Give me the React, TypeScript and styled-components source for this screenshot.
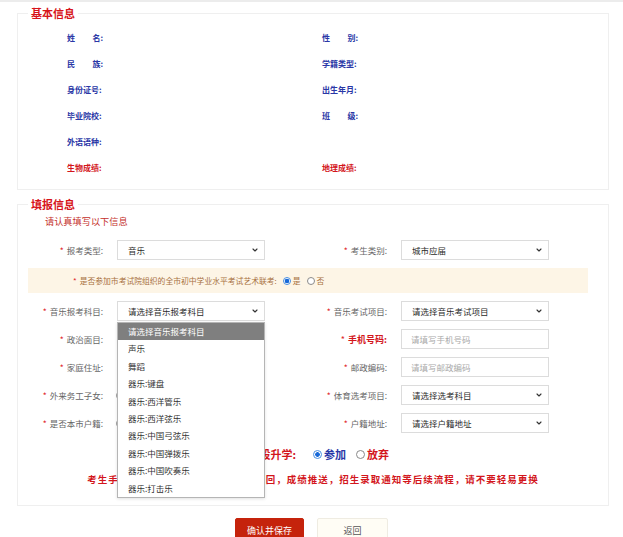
import styled, { createGlobalStyle } from 'styled-components';
import { ChevronDown } from 'lucide-react';

const GlobalStyle = createGlobalStyle`
  html, body {
    margin: 0;
    overflow: hidden;
    background: #fff;
  }
  body {
    font-family: "Noto Sans CJK SC", "Noto Sans", sans-serif;
  }
`

const Page = styled.div`
  width: 623px;
  border-top: 2px solid #ececec;
`

const Card = styled.fieldset<{ $top: number }>`
  margin: ${p => p.$top}px 14px 0 17px;
  padding: 0;
  min-width: 0;
  border: 1px solid #efefef;
  background: #fff;
`

const Legend = styled.legend`
  margin-left: 10px;
  padding: 0 3px;
  font-size: 11px;
  line-height: 14px;
  font-weight: bold;
  color: #d7141a;
`

const InfoGrid = styled.div`
  display: grid;
  grid-template-columns: 255px 1fr;
  row-gap: 12px;
  padding: 11px 0 14px 49px;
`

const InfoLabel = styled.div<{ $red?: boolean }>`
  display: flex;
  justify-content: space-between;
  width: 36px;
  height: 14px;
  font-size: 8px;
  line-height: 14px;
  font-weight: bold;
  white-space: nowrap;
  color: ${p => (p.$red ? '#d3161c' : '#2a37a6')};
`

const Hint = styled.p`
  margin: 5px 0 0 27px;
  font-size: 9.2px;
  line-height: 11px;
  color: #c4302b;
`

const Form = styled.div`
  display: flex;
  flex-direction: column;
  gap: 8px;
  margin-top: 13px;
`

const FormRow = styled.div`
  display: grid;
  grid-template-columns: 99px 148px 136px 148px;
  align-items: center;
  height: 20px;
`

const FieldLabel = styled.label<{ $strong?: boolean }>`
  padding-right: 14px;
  text-align: right;
  white-space: nowrap;
  font-size: ${p => (p.$strong ? '9px' : '8.5px')};
  font-weight: ${p => (p.$strong ? 'bold' : 'normal')};
  color: ${p => (p.$strong ? '#d3161c' : '#666')};

  b {
    color: #e0242a;
    font-weight: normal;
    margin-right: 3px;
  }
`

const SelectBox = styled.div`
  position: relative;
  display: flex;
  align-items: center;
  justify-content: space-between;
  height: 20px;
  box-sizing: border-box;
  padding: 0 5px 0 10px;
  border: 1px solid #dcdcdc;
  background: #fff;
  font-size: 8.5px;
  color: #2b2b2b;

  svg {
    color: #333;
  }
`

const TextInput = styled.input`
  width: 148px;
  height: 20px;
  box-sizing: border-box;
  padding: 0 9px;
  border: 1px solid #dcdcdc;
  font-family: inherit;
  font-size: 8.5px;
  color: #333;
  outline: none;

  &::placeholder {
    color: #aaa;
  }
`

const Options = styled.ul`
  position: absolute;
  top: 20px;
  left: -1px;
  z-index: 10;
  width: 148px;
  box-sizing: border-box;
  margin: 0;
  padding: 0;
  list-style: none;
  border: 1px solid #b5b5b5;
  background: #fff;
  box-shadow: 0 1px 3px rgba(0, 0, 0, 0.12);
`

const Option = styled.li<{ $active?: boolean }>`
  height: 17.4px;
  line-height: 17.4px;
  padding-left: 10px;
  font-size: 8.5px;
  color: ${p => (p.$active ? '#fff' : '#333')};
  background: ${p => (p.$active ? '#7f7f7f' : '#fff')};
`

const Band = styled.div`
  display: flex;
  align-items: center;
  height: 25px;
  margin: 0 20px 0 10px;
  padding-left: 45px;
  background: #fdf5e6;
  font-size: 7.8px;
  color: #a8713f;

  b {
    color: #e0242a;
    font-weight: normal;
    margin-right: 3px;
  }
`

const Radio = styled.input.attrs({ type: 'radio' })<{ $size?: number }>`
  appearance: none;
  flex: none;
  width: ${p => p.$size ?? 8}px;
  height: ${p => p.$size ?? 8}px;
  margin: 0 2px 0 6px;
  box-sizing: border-box;
  border: 1px solid #8a8a8a;
  border-radius: 50%;
  background: #fff;

  &:checked {
    border-color: #4a8fe0;
    background: radial-gradient(circle, #1769d8 0 2px, #fff 2.6px);
  }
`

const RadioGroup = styled.div`
  display: flex;
  align-items: center;
  margin-left: -7px;
  font-size: 8.5px;
  color: #333;
`

const ChoiceRow = styled.div`
  display: flex;
  align-items: center;
  margin-top: 14px;
  height: 14px;
  font-size: 11px;
  line-height: 14px;
  font-weight: bold;
`

const ChoiceLabel = styled.span`
  width: 278px;
  margin-right: 11px;
  text-align: right;
  color: #d3161c;
`

const ChoiceText = styled.span<{ $red?: boolean }>`
  margin-right: 4px;
  color: ${p => (p.$red ? '#d3161c' : '#2a37a6')};
`

const Warning = styled.p`
  margin: 11px 0 0;
  padding-bottom: 19px;
  text-align: center;
  font-size: 9.5px;
  line-height: 14px;
  font-weight: bold;
  letter-spacing: 1px;
  color: #d3161c;
`

const Actions = styled.div`
  display: flex;
  justify-content: center;
  gap: 13px;
  margin-top: 12px;
`

const Button = styled.button<{ $primary?: boolean }>`
  width: ${p => (p.$primary ? 69 : 71)}px;
  height: 24px;
  border: 1px solid ${p => (p.$primary ? '#c5230c' : '#efece2')};
  border-radius: 2px;
  background: ${p => (p.$primary ? '#c5230c' : '#fffdf5')};
  color: ${p => (p.$primary ? '#fff' : '#555')};
  font-family: inherit;
  font-size: 9px;
`

type InfoItem = { text: string | [string, string]; red?: boolean } | null

const infoRows: [InfoItem, InfoItem][] = [
  [{ text: ['姓', '名:'] }, { text: ['性', '别:'] }],
  [{ text: ['民', '族:'] }, { text: '学籍类型:' }],
  [{ text: '身份证号:' }, { text: '出生年月:' }],
  [{ text: '毕业院校:' }, { text: ['班', '级:'] }],
  [{ text: '外语语种:' }, null],
  [{ text: '生物成绩:', red: true }, { text: '地理成绩:', red: true }],
]

const musicSubjects = [
  '请选择音乐报考科目',
  '声乐',
  '舞蹈',
  '器乐:键盘',
  '器乐:西洋管乐',
  '器乐:西洋弦乐',
  '器乐:中国弓弦乐',
  '器乐:中国弹拨乐',
  '器乐:中国吹奏乐',
  '器乐:打击乐',
]

const Info = ({ item }: { item: InfoItem }) => {
  if (!item) return <div />
  return (
    <InfoLabel $red={item.red}>
      {Array.isArray(item.text) ? (
        <>
          <span>{item.text[0]}</span>
          <span>{item.text[1]}</span>
        </>
      ) : (
        <span>{item.text}</span>
      )}
    </InfoLabel>
  )
}

const Select = ({ value, children }: { value: string; children?: React.ReactNode }) => (
  <SelectBox>
    <span>{value}</span>
    <ChevronDown size={8} strokeWidth={3.4} />
    {children}
  </SelectBox>
)

const Label = ({ text, strong }: { text: string; strong?: boolean }) => (
  <FieldLabel $strong={strong}>
    <b>*</b>
    {text}
  </FieldLabel>
)

// these sit under the open dropdown, only the radio edges peek out
const YesNo = ({ name }: { name: string }) => (
  <RadioGroup>
    <Radio name={name} $size={9} />
    <span>是</span>
    <Radio name={name} $size={9} />
    <span>否</span>
  </RadioGroup>
)

export default function App() {
  return (
    <Page>
      <GlobalStyle />
      <Card $top={4}>
        <Legend>基本信息</Legend>
        <InfoGrid>
          {infoRows.map((row, i) => [
            <Info key={`l${i}`} item={row[0]} />,
            <Info key={`r${i}`} item={row[1]} />,
          ])}
        </InfoGrid>
      </Card>

      <Card $top={7}>
        <Legend>填报信息</Legend>
        <Hint>请认真填写以下信息</Hint>
        <Form>
          <FormRow>
            <Label text="报考类型:" />
            <Select value="音乐" />
            <Label text="考生类别:" />
            <Select value="城市应届" />
          </FormRow>
          <Band>
            <b>*</b>是否参加市考试院组织的全市初中学业水平考试艺术联考:
            <Radio name="art" defaultChecked />
            <span>是</span>
            <Radio name="art" />
            <span>否</span>
          </Band>
          <FormRow>
            <Label text="音乐报考科目:" />
            <Select value="请选择音乐报考科目">
              <Options>
                {musicSubjects.map((s, i) => (
                  <Option key={s} $active={i === 0}>{s}</Option>
                ))}
              </Options>
            </Select>
            <Label text="音乐考试项目:" />
            <Select value="请选择音乐考试项目" />
          </FormRow>
          <FormRow>
            <Label text="政治面目:" />
            <Select value="请选择政治面目" />
            <Label text="手机号码:" strong />
            <TextInput placeholder="请填写手机号码" />
          </FormRow>
          <FormRow>
            <Label text="家庭住址:" />
            <TextInput placeholder="请填写家庭住址" />
            <Label text="邮政编码:" />
            <TextInput placeholder="请填写邮政编码" />
          </FormRow>
          <FormRow>
            <Label text="外来务工子女:" />
            <YesNo name="migrant" />
            <Label text="体育选考项目:" />
            <Select value="请选择选考科目" />
          </FormRow>
          <FormRow>
            <Label text="是否本市户籍:" />
            <YesNo name="local" />
            <Label text="户籍地址:" />
            <Select value="请选择户籍地址" />
          </FormRow>
        </Form>
        <ChoiceRow>
          <ChoiceLabel>是否参加中高职贯通段升学:</ChoiceLabel>
          <Radio name="join" $size={9} defaultChecked />
          <ChoiceText>参加</ChoiceText>
          <Radio name="join" $size={9} />
          <ChoiceText $red>放弃</ChoiceText>
        </ChoiceRow>
        <Warning>
          考生手机号码将用于报名确认、密码找回，成绩推送，招生录取通知等后续流程，请不要轻易更换
        </Warning>
      </Card>

      <Actions>
        <Button $primary>确认并保存</Button>
        <Button>返回</Button>
      </Actions>
    </Page>
  )
}
